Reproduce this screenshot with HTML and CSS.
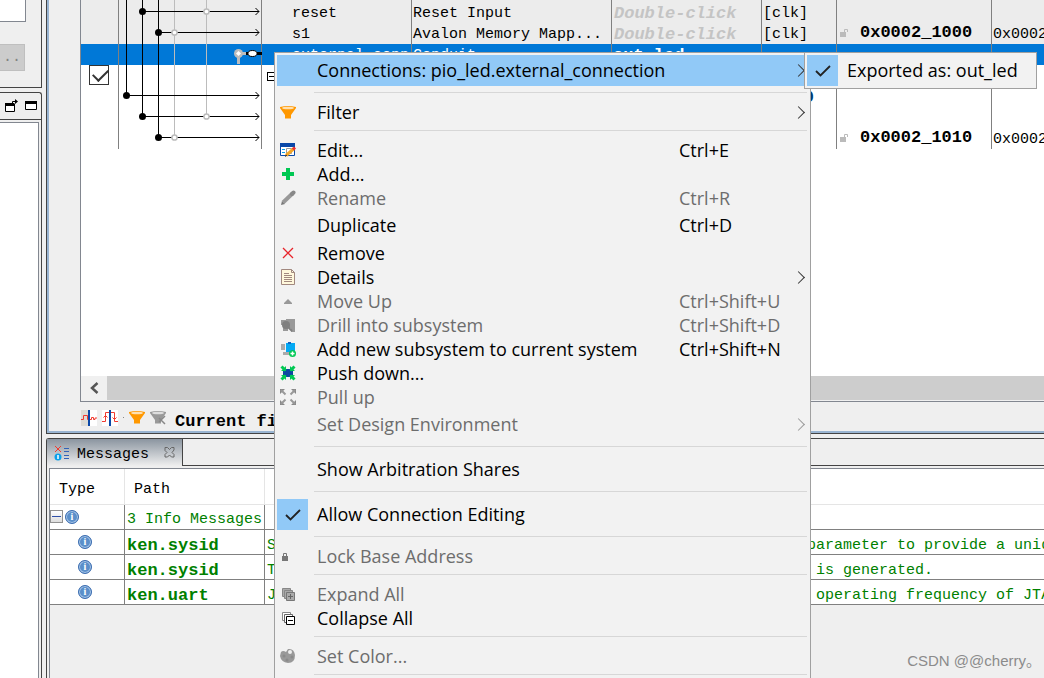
FILE: index.html
```html
<!DOCTYPE html>
<html lang="en">
<head>
<meta charset="utf-8">
<title>Platform Designer</title>
<link rel="stylesheet" href="styles.css">
</head>
<body>
<div class="app">
  <aside class="side">
    <section class="side-top">
      <input class="side-input" type="text" aria-label="Search">
      <button class="side-btn" type="button">..</button>
    </section>
    <section class="side-bottom">
      <header class="side-head">
        <button class="bare" type="button" aria-label="Detach"><svg width="15" height="14" viewBox="0 0 15 14"><path d="M1 4h10v9H1z" fill="#fff"/><path d="M1.500 5v7.500h9V5M1 5h10M8.500 5V2.500h4" fill="none" stroke="#000"/><path d="M1 4h9v3H1zM11 0l3 2.500-3 2.500z"/></svg></button>
        <button class="bare" type="button" aria-label="Maximize"><svg width="12" height="10" viewBox="0 0 12 10"><path d="M.5.5h11v8H.5z" fill="#fff" stroke="#000"/><path d="M0 0h12v3H0z"/></svg></button>
      </header>
      <div class="side-body"></div>
    </section>
  </aside>
  <main class="main">
    <section class="system">
      <div class="grid-frame">
        <div class="grid-view">
          <table class="sys">
            <colgroup><col class="w-use"><col class="w-conn"><col class="w-name"><col class="w-desc"><col class="w-exp"><col class="w-clk"><col class="w-base"><col></colgroup>
            <tbody>
            <tr class="sliver shade"><td></td><td></td><td></td><td></td><td></td><td></td><td></td><td></td></tr>
            <tr class="shade"><td></td><td></td><td class="name">reset</td><td>Reset Input</td><td class="hint">Double-click</td><td>[clk]</td><td></td><td></td></tr>
            <tr class="shade"><td></td><td></td><td class="name">s1</td><td>Avalon Memory Mapp...</td><td class="hint">Double-click</td><td>[clk]</td><td class="base"><svg class="lock" width="8" height="9" viewBox="0 0 8 9"><path d="M0 4h6v5H0z" fill="#bbb"/><path d="M4.500 4V1.500h3V4" fill="none" stroke="#bbb"/></svg><b>0x0002_1000</b></td><td>0x0002_100f</td></tr>
            <tr class="sel"><td></td><td></td><td class="name">external_conn...</td><td>Conduit</td><td class="bold">out_led</td><td></td><td></td><td></td></tr>
            <tr><td class="use"><input class="check" type="checkbox" checked aria-label="Use component"></td><td></td><td><span class="tree"></span></td><td></td><td></td><td></td><td></td><td></td></tr>
            <tr><td></td><td></td><td></td><td></td><td></td><td class="bold navy">clk_0</td><td></td><td></td></tr>
            <tr><td></td><td></td><td></td><td></td><td></td><td></td><td></td><td></td></tr>
            <tr><td></td><td></td><td></td><td></td><td></td><td></td><td class="base"><svg class="lock" width="8" height="9" viewBox="0 0 8 9"><path d="M0 4h6v5H0z" fill="#bbb"/><path d="M4.500 4V1.500h3V4" fill="none" stroke="#bbb"/></svg><b>0x0002_1010</b></td><td>0x0002_1017</td></tr>
            </tbody>
          </table>
          <svg class="wires" width="144" height="149" viewBox="118 0 144 149" fill="none">
            <path d="M174.500 0v137M206.500 0v116" stroke="#bcbcbc"/>
            <path d="M126.500 0v95.500H259M142.500 0v116.500H259M158.500 0v137.500H259M142.500 11.500H259M158.500 32.500H259" stroke="#000"/>
            <path d="M255.500 8l3.500 3.500-3.500 3.500M255.500 29l3.500 3.500-3.500 3.500M255.500 92l3.500 3.500-3.500 3.500M255.500 113l3.500 3.500-3.500 3.500M255.500 134l3.500 3.500-3.500 3.500" stroke="#000"/>
            <g fill="#000"><circle cx="142.500" cy="11.500" r="3.500"/><circle cx="158.500" cy="32.500" r="3.500"/><circle cx="126.500" cy="95.500" r="3.500"/><circle cx="142.500" cy="116.500" r="3.500"/><circle cx="158.500" cy="137.500" r="3.500"/></g>
            <g fill="#fff" stroke="#bcbcbc" stroke-width="1.500"><circle cx="206.500" cy="11.500" r="2.600"/><circle cx="174.500" cy="32.500" r="2.600"/><circle cx="206.500" cy="116.500" r="2.600"/><circle cx="174.500" cy="137.500" r="2.600"/></g>
            <path d="M238.500 53v11M238 53.500h9" stroke="#bcbcbc" stroke-width="3"/>
            <path d="M246 53.500h16" stroke="#000" stroke-width="3"/>
            <circle cx="238.500" cy="53.500" r="4.500" fill="#bcbcbc"/><path d="M238.500 51l2.500 2.500-2.500 2.500-2.500-2.500z" fill="#fff"/>
            <ellipse cx="252.500" cy="53.500" rx="4.500" ry="3" fill="#fff" stroke="#000"/>
          </svg>
        </div>
        <div class="hscroll">
          <button class="hs-btn" type="button" aria-label="Scroll left"><svg width="10" height="12" viewBox="0 0 10 12"><path d="M8.500 1L3 6l5.500 5" fill="none" stroke="#555" stroke-width="2.500"/></svg></button>
          <div class="hs-thumb"></div>
        </div>
      </div>
      <div class="filters">
        <button class="bare" type="button" aria-label="Clock domains"><svg width="16" height="16" viewBox="0 0 16 16"><path d="M0 0h8v16H0z" fill="#dddcd6"/><path d="M8 0h8v16H8z" fill="#fff"/><path d="M0 9.500h2.500v-4h4v4h4v-2h2v2h1.500v-1.500h2" fill="none" stroke="#f03a30"/><path d="M8 0v16" stroke="#0a48a8" stroke-width="2"/></svg></button>
        <button class="bare" type="button" aria-label="Reset domains"><svg width="16" height="16" viewBox="0 0 16 16"><path d="M0 0h16v16H0z" fill="#fff"/><path d="M0 11.500h3.500v-9h9v9H16M1.500 7.500l2-2 2 2M10.500 7.500l2 2 2-2" fill="none" stroke="#f03a30"/><path d="M8 0v16" stroke="#0a48a8" stroke-width="2"/></svg></button>
        <span class="dot"></span>
        <button class="bare" type="button" aria-label="Filter"><svg width="16" height="13" viewBox="0 0 16 13"><path d="M0 1q8-2 16 0v1l-5 7v3.500H5V9L0 2z" fill="#ff9800"/><ellipse cx="8" cy="2" rx="6" ry="1.300" fill="#ffe0b0"/></svg></button>
        <button class="bare" type="button" aria-label="Clear filter"><svg width="16" height="14" viewBox="0 0 16 14"><path d="M0 1q8-2 16 0v1l-5 7v3.500H5V9L0 2z" fill="#999"/><ellipse cx="8" cy="2" rx="6" ry="1.300" fill="#ddd"/><path d="M15 5L9 11M9 7l6 6" stroke="#888" stroke-width="1.500"/></svg></button>
        <span class="cur">Current filter:</span>
      </div>
    </section>
    <section class="messages">
      <div class="tabs">
        <div class="tab">
          <svg width="16" height="16" viewBox="0 0 16 16" fill="none"><path d="M1 1l6 6M7 1L1 7" stroke="#f03a30"/><circle cx="4" cy="12" r="3.500" fill="#0aa0ea"/><path d="M4 10v4" stroke="#fff" stroke-width="1.500"/><path d="M10 3.500h5M10 6.500h5M10 10.500h5M10 13.500h5" stroke="#3062b8"/></svg>
          <span class="tab-name">Messages</span>
          <button class="bare" type="button" aria-label="Close"><svg width="11" height="11" viewBox="0 0 11 11"><path d="M1 .5h2.500l2 2 2-2H10v2.500L8 5.500l2 2V10H7.500l-2-2-2 2H1V7.500l2-2-2-2z" fill="none" stroke="#666"/></svg></button>
        </div>
        <div class="tab-fill"></div>
      </div>
      <div class="msg-frame">
        <table class="msg">
          <colgroup><col class="w-type"><col class="w-path"><col></colgroup>
          <thead><tr><th>Type</th><th>Path</th><th></th></tr></thead>
          <tbody>
          <tr><td class="root"><span class="fold"></span><span class="info">i</span></td><td>3 Info Messages</td><td></td></tr>
          <tr><td class="leaf"><span class="info">i</span></td><td class="bold">ken.sysid</td><td>System ID is not assigned automatically. Edit the System ID parameter to provide a unique ID</td></tr>
          <tr><td class="leaf"><span class="info">i</span></td><td class="bold">ken.sysid</td><td>Time stamp will be automatically updated when this component is generated.</td></tr>
          <tr><td class="leaf"><span class="info">i</span></td><td class="bold">ken.uart</td><td>JTAG UART IP input clock need to be at least double (2x) the operating frequency of JTAG TCK on board</td></tr>
          </tbody>
        </table>
      </div>
    </section>
  </main>

  <div class="menu" role="menu">
    <button class="item tall open" type="button"><span class="ico"></span><span class="txt">Connections: pio_led.external_connection</span><span class="arr"></span></button>
    <hr>
    <button class="item" type="button"><span class="ico"><svg width="16" height="13" viewBox="0 0 16 13"><path d="M0 1q8-2 16 0v1l-5 7v3.500H5V9L0 2z" fill="#ff9800"/><ellipse cx="8" cy="2" rx="6" ry="1.300" fill="#ffe0b0"/></svg></span><span class="txt">Filter</span><span class="arr"></span></button>
    <hr>
    <button class="item" type="button"><span class="ico"><svg width="16" height="14" viewBox="0 0 16 14"><path d="M.5.5h14v12H.5z" fill="#fff" stroke="#0a48a8"/><path d="M0 0h15v4H0z" fill="#0a48a8"/><path d="M2 6.500h3M2 9.500h3" stroke="#0aa0ea"/><path d="M6.500 5.500h5v5h-5z" fill="none" stroke="#999"/><path d="M6 12.500l8-7" stroke="#f5a623" stroke-width="3"/><path d="M13 6.500l2-2" stroke="#f03030" stroke-width="3"/><path d="M5 13.500l2-1.500" stroke="#333"/></svg></span><span class="txt">Edit...</span><span class="key">Ctrl+E</span></button>
    <button class="item" type="button"><span class="ico"><svg width="12" height="12" viewBox="0 0 12 12"><path d="M4 0h4v4h4v4H8v4H4V8H0V4h4z" fill="#00c853"/></svg></span><span class="txt">Add...</span></button>
    <button class="item" type="button" disabled><span class="ico"><svg width="16" height="16" viewBox="0 0 16 16"><path d="M1 15l1-4 3 3z" fill="#777"/><path d="M3 12.500L12.500 3.500" stroke="#999" stroke-width="4"/><path d="M12 4l1.500-1.500" stroke="#888" stroke-width="4" stroke-linecap="round"/></svg></span><span class="txt">Rename</span><span class="key">Ctrl+R</span></button>
    <button class="item tall" type="button"><span class="ico"></span><span class="txt">Duplicate</span><span class="key">Ctrl+D</span></button>
    <button class="item" type="button"><span class="ico"><svg width="12" height="12" viewBox="0 0 12 12"><path d="M1 1l10 10M11 1L1 11" stroke="#e8232a" stroke-width="1.300"/></svg></span><span class="txt">Remove</span></button>
    <button class="item" type="button"><span class="ico"><svg width="14" height="16" viewBox="0 0 14 16"><path d="M.5.5h10l3 3v12H.5z" fill="#fff8dc" stroke="#a1887f"/><path d="M10.500.5v3h3M3 4.500h5M3 6.500h8M3 8.500h8M3 10.500h8M3 12.500h8" fill="none" stroke="#a1887f"/></svg></span><span class="txt">Details</span><span class="arr"></span></button>
    <button class="item" type="button" disabled><span class="ico"><svg width="8" height="5" viewBox="0 0 8 5"><path d="M0 5V4l4-4 4 4v1z" fill="#999"/></svg></span><span class="txt">Move Up</span><span class="key">Ctrl+Shift+U</span></button>
    <button class="item" type="button" disabled><span class="ico"><svg width="14" height="14" viewBox="0 0 14 14"><path d="M0 2h5v5H0zM5 1h9v9H5zM2 10h5v3H2zM10 10h4v4h-4z" fill="#999"/><circle cx="5" cy="7" r="4" fill="#808080"/><path d="M7 9l4 4" stroke="#808080" stroke-width="2"/></svg></span><span class="txt">Drill into subsystem</span><span class="key">Ctrl+Shift+D</span></button>
    <button class="item" type="button"><span class="ico"><svg width="16" height="16" viewBox="0 0 16 16"><path d="M1 3h4v6H1zM3 11h7v3H3z" fill="#aaa"/><path d="M6 2h9v9H6z" fill="#03a9f4"/><path d="M8 1h3v2H8z" fill="#1565c0"/><circle cx="12.500" cy="12.500" r="3.500" fill="#00c853"/><path d="M10.500 12.500h4M12.500 10.500v4" stroke="#fff" stroke-width="1.500"/></svg></span><span class="txt">Add new subsystem to current system</span><span class="key">Ctrl+Shift+N</span></button>
    <button class="item" type="button"><span class="ico"><svg width="16" height="16" viewBox="0 0 16 16"><path d="M3 4h10v8H3z" fill="#0d47a1"/><path d="M1.500 1.500l4 4M14.500 1.500l-4 4M1.500 14.500l4-4M14.500 14.500l-4-4" stroke="#00c853" stroke-width="3"/><path d="M1 6h5V1zM15 6h-5V1zM1 10h5v5zM15 10h-5v5z" fill="#00c853"/></svg></span><span class="txt">Push down...</span></button>
    <button class="item" type="button" disabled><span class="ico"><svg width="16" height="16" viewBox="0 0 16 16"><path d="M0 0h5L0 5zM16 0h-5l5 5zM0 16h5l-5-5zM16 16h-5l5-5z" fill="#888"/><path d="M1 1l4.500 4.500M15 1l-4.500 4.500M1 15l4.500-4.500M15 15l-4.500-4.500" stroke="#999" stroke-width="2"/></svg></span><span class="txt">Pull up</span></button>
    <button class="item tall" type="button" disabled><span class="ico"></span><span class="txt">Set Design Environment</span><span class="arr"></span></button>
    <hr>
    <button class="item tall" type="button"><span class="ico"></span><span class="txt">Show Arbitration Shares</span></button>
    <hr>
    <button class="item tall" type="button"><span class="ico on"><svg width="16" height="12" viewBox="0 0 16 12"><path d="M1 6l4.500 4.500L15 1" fill="none" stroke="#222" stroke-width="1.800"/></svg></span><span class="txt">Allow Connection Editing</span></button>
    <hr>
    <button class="item" type="button" disabled><span class="ico small"><svg width="6" height="9" viewBox="0 0 6 9"><path d="M0 4h6v5H0z" fill="#777"/><path d="M1.500 4V1.500h3V4" fill="none" stroke="#777"/></svg></span><span class="txt">Lock Base Address</span></button>
    <hr>
    <button class="item" type="button" disabled><span class="ico"><svg width="13" height="13" viewBox="0 0 13 13"><path d="M.5.5h8v8h-8z" fill="#aaa" stroke="#888"/><path d="M2.500 2.500h8v8h-8z" fill="#aaa" stroke="#888"/><path d="M4.500 4.500h8v8h-8z" fill="#aaa" stroke="#777"/><path d="M6 8.500h5M8.500 6v5" stroke="#666"/></svg></span><span class="txt">Expand All</span></button>
    <button class="item" type="button"><span class="ico"><svg width="13" height="13" viewBox="0 0 13 13"><path d="M.5.5h8v8h-8z" fill="#fff" stroke="#888"/><path d="M2.500 2.500h8v8h-8z" fill="#fff" stroke="#666"/><path d="M4.500 4.500h8v8h-8z" fill="#fff" stroke="#000"/><path d="M6 8.500h5" stroke="#000"/></svg></span><span class="txt">Collapse All</span></button>
    <hr>
    <button class="item" type="button" disabled><span class="ico"><svg width="16" height="16" viewBox="0 0 16 16"><path d="M1 4q2-2 5 0l2-3q6-1 7 6 0 8-7 8Q1 14 0 8z" fill="#999"/><circle cx="10" cy="4" r="2" fill="#eee"/><circle cx="4" cy="8" r="1.500" fill="#8a8a8a"/><circle cx="7" cy="12" r="1.500" fill="#8a8a8a"/><circle cx="12" cy="9" r="1.500" fill="#8a8a8a"/></svg></span><span class="txt">Set Color...</span></button>
    <hr>
    <div class="menu submenu" role="menu">
      <button class="item tall" type="button"><span class="ico on"><svg width="16" height="12" viewBox="0 0 16 12"><path d="M1 6l4.500 4.500L15 1" fill="none" stroke="#222" stroke-width="1.800"/></svg></span><span class="txt">Exported as: out_led</span></button>
    </div>
  </div>
  <div class="mark">CSDN @@cherry。</div>
</div>
</body>
</html>
```
FILE: styles.css
```css
* { box-sizing: border-box; }
body {
  margin: 0;
  background: #efefef;
  color: #000;
  font: 15px/21px "Liberation Mono", "Noto Sans CJK SC", monospace;
}
button { font: inherit; color: inherit; }
svg { display: block; }
.bare { border: 0; padding: 0; background: none; }
.app {
  position: relative;
  display: flex;
  gap: 4px;
  height: 100vh;
  overflow: hidden;
}

/* left strip */
.side {
  flex: 0 0 42px;
  display: flex;
  flex-direction: column;
  gap: 4px;
}
.side-top {
  border-right: 1px solid #444;
  border-bottom: 1px solid #444;
  padding-bottom: 16px;
}
.side-input {
  display: block;
  width: 26px;
  height: 22px;
  margin-bottom: 22px;
  border: 1px solid #828790;
  border-width: 0 1px 1px 0;
  background: #fff;
}
.side-btn {
  display: block;
  width: 25px;
  height: 27px;
  padding: 0;
  border: 1px solid #bfbfbf;
  border-left: 0;
  background: #ccc;
  color: #838383;
  line-height: 25px;
}
.side-bottom {
  flex: 1;
  display: flex;
  flex-direction: column;
  border: 1px solid #444;
  border-width: 1px 1px 0 0;
  border-top-right-radius: 3px;
}
.side-head {
  display: flex;
  align-items: center;
  justify-content: flex-end;
  gap: 6px;
  height: 27px;
  padding-right: 4px;
  border-bottom: 1px solid #444;
}
.side-body {
  flex: 1;
  margin: 2px 2px 0 0;
  border: 1px solid #828790;
  border-width: 1px 1px 0 0;
  background: #fff;
}

.main {
  flex: 1;
  min-width: 0;
  display: flex;
  flex-direction: column;
  gap: 4px;
}

/* system contents */
.system {
  border-left: 1px solid #444;
  border-bottom: 1px solid #444;
  box-shadow: inset 2px -2px #99b4d1;
  padding-left: 33px;
}
.grid-frame {
  border: 1px solid #828790;
  border-width: 0 0 1px 1px;
  background: #fff;
}
.grid-view { position: relative; height: 376px; overflow: hidden; }
table { border-collapse: separate; border-spacing: 0; table-layout: fixed; width: 100%; }
td, th { padding: 0; text-align: left; font-weight: normal; white-space: nowrap; overflow: hidden; }
.bold { font-size: 17px; font-weight: bold; }
.w-use { width: 38px; }
.w-conn { width: 143px; }
.w-name, .w-exp { width: 150px; }
.w-desc { width: 200px; }
.w-clk { width: 75px; }
.w-base { width: 155px; }
.sys td {
  height: 21px;
  padding: 2px 0 0 1px;
  border-right: 1px solid #808080;
  line-height: 18px;
}
.sys td:last-child { border-right: 0; }
.sys .sliver td { height: 2px; padding: 0; }
.shade { background: #ececec; }
.sel { background: #0078d7; color: #fff; }
.sys .name { padding-left: 30px; }
.sys .hint {
  padding: 3px 0 0 2px;
  color: #c4c4c4;
  font: italic bold 17px/18px "Liberation Mono", monospace;
}
.navy { color: #003a70; }
.sys .use { padding: 0 0 0 8px; vertical-align: top; }
.check {
  appearance: none;
  display: block;
  position: relative;
  width: 20px;
  height: 20px;
  margin: 0;
  border: 1px solid #333;
  background: #fff;
}
.check:checked::after {
  content: "";
  position: absolute;
  left: 3px;
  top: 3px;
  width: 13px;
  height: 7px;
  border: solid #333;
  border-width: 0 0 2px 2px;
  transform: rotate(-45deg);
}
.tree {
  display: block;
  width: 9px;
  height: 9px;
  margin-left: 4px;
  border: 1px solid #000;
  background: linear-gradient(#000, #000) center / 5px 1px no-repeat;
}
.lock { display: inline-block; margin: 0 12px 0 2px; }
.base b { font-size: 17px; line-height: 16px; }
.sys .base { padding-top: 0; }
.wires { position: absolute; left: 37px; top: 0; }
.hscroll { display: flex; height: 25px; border-bottom: 1px solid #f0f0f0; }
.hs-btn {
  flex: 0 0 26px;
  display: grid;
  place-items: center;
  padding: 0;
  border: 0;
  background: #f0f0f0;
}
.hs-thumb { flex: 1; background: #cdcdcd; }
.filters {
  display: flex;
  align-items: center;
  gap: 5px;
  height: 31px;
  padding-left: 1px;
}
.dot { width: 1px; height: 1px; background: #888; }
.cur { font-size: 17px; font-weight: bold; margin: 8px 0 0 4px; }

/* messages */
.messages {
  flex: 1;
  display: flex;
  flex-direction: column;
  border: 1px solid #444;
  border-width: 1px 0 0 1px;
  border-top-left-radius: 3px;
}
.tabs { display: flex; height: 27px; }
.tab {
  display: flex;
  align-items: center;
  gap: 7px;
  width: 136px;
  padding-left: 7px;
  border-right: 1px solid #444;
  background: linear-gradient(#8b95a0, #efefef);
}
.tab-name { padding-top: 4px; }
.tab button { margin-left: 8px; }
.tab-fill { flex: 1; border-bottom: 1px solid #444; }
.msg-frame {
  margin: 2px 0 0 2px;
  flex: 1;
  border: 1px solid #828790;
  border-width: 1px 0 0 1px;
}
.w-type { width: 75px; }
.w-path { width: 140px; }
.msg { background: #fff; color: #008000; }
.msg th {
  height: 36px;
  padding: 6px 0 0 9px;
  border-right: 1px solid #e5e5e5;
  border-bottom: 1px solid #e5e5e5;
  color: #000;
}
.msg td {
  height: 25px;
  padding: 5px 0 0 2px;
  border-right: 1px solid #808080;
  border-bottom: 1px solid #808080;
  line-height: 19px;
}
.msg tr + tr td { padding-top: 7px; line-height: 17px; }
.msg th:last-child, .msg td:last-child { border-right: 0; }
.msg .root { padding: 0; }
.msg tr + tr .leaf { padding: 0 0 0 28px; }
.info, .fold { display: inline-block; vertical-align: middle; }
.info {
  width: 14px;
  height: 14px;
  border: 1px solid #3c6db0;
  border-radius: 50%;
  background: #5b8fca;
  box-shadow: inset 0 0 0 1px #a9c6e8;
  color: #fff;
  font: bold 10px/12px "Liberation Serif", serif;
  text-align: center;
}
.fold {
  width: 13px;
  height: 13px;
  margin-right: 2px;
  border: 1px solid #919191;
  background: linear-gradient(#3050a8, #3050a8) center / 9px 1px no-repeat, linear-gradient(#fff, #ddd);
}

/* context menu */
.menu {
  position: absolute;
  left: 274px;
  top: 52px;
  width: 537px;
  padding: 2px;
  border: 1px solid #a0a0a0;
  background: #f2f2f2;
  font: 18px/24px "Open Sans", "Noto Sans CJK SC", sans-serif;
}
.submenu { left: 529px; top: -1px; width: 233px; }
.menu hr { height: 1px; margin: 6px 1px 7px 37px; border: 0; background: #d7d7d7; }
.item {
  display: flex;
  align-items: center;
  width: 100%;
  height: 24px;
  padding: 0;
  border: 0;
  background: none;
  text-align: left;
  white-space: nowrap;
}
.item.tall { height: 31px; }
.item:disabled { color: #6d6d6d; }
.item.open { background: #91c9f7; }
.ico {
  flex: 0 0 31px;
  align-self: stretch;
  display: grid;
  place-items: center;
  margin-right: 9px;
  padding-right: 9px;
}
.ico.small { padding-right: 15px; }
.ico.on { background: #91c9f7; padding-right: 0; }
.txt { flex: 1; }
.tall .txt, .tall .key { padding-bottom: 2px; }
.key { flex: 0 0 129px; }
.arr {
  width: 9px;
  height: 9px;
  margin-right: 5px;
  border: solid #333;
  border-width: 1px 1px 0 0;
  transform: rotate(45deg);
}
.item:disabled .arr { border-color: #999; }

.mark {
  position: absolute;
  right: 3px;
  bottom: 7px;
  color: #8b8b8b;
  font: 15px/21px "Liberation Sans", "Noto Sans CJK SC", sans-serif;
}
```
